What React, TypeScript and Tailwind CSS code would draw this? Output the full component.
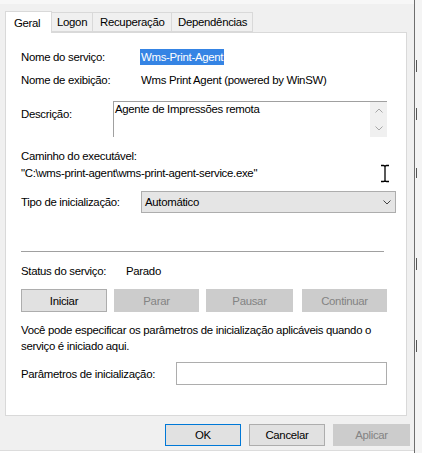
import React from "react";

function Chevron({ up = false, className = "" }: { up?: boolean; className?: string }) {
  return (
    <svg width="8" height="5" viewBox="0 0 8 5" className={className}>
      <path
        d={up ? "M0.5 4.5 L4 1 L7.5 4.5" : "M0.5 0.5 L4 4 L7.5 0.5"}
        fill="none"
        stroke="currentColor"
        strokeWidth="1"
      />
    </svg>
  );
}

function Btn({
  label,
  disabled,
  focused,
  className = "",
}: {
  label: string;
  disabled?: boolean;
  focused?: boolean;
  className?: string;
}) {
  return (
    <div
      className={`flex items-center justify-center border ${
        disabled
          ? "border-[#cccccc] bg-[#cccccc] text-[#838383]"
          : focused
          ? "border-[#0078d7] bg-[#e1e1e1] text-black"
          : "border-[#adadad] bg-[#e1e1e1] text-black"
      } ${className}`}
    >
      {label}
    </div>
  );
}

export default function App() {
  return (
    <div
      className="relative flex h-[453px] w-[422px] bg-white text-[11.4px] leading-[16px] tracking-[-0.3px] text-black"
      style={{ fontFamily: '"Liberation Sans", Arial, sans-serif' }}
    >
      <div className="flex h-[451px] w-[414px] flex-col border-b border-[#dcdcdc] bg-[#f0f0f0]">
        <div className="h-[4px] bg-[#f7f7f7]" />

        {/* tabs */}
        <div className="flex h-[28px] items-end pl-[5px]">
          <div className="relative z-10 -mb-px flex h-[22px] w-[47px] items-start border border-b-0 border-[#d9d9d9] bg-white pl-[8px] pt-[3px]">
            Geral
          </div>
          <div className="flex h-[20px] w-[41px] items-center border border-l-0 border-[#d9d9d9] pl-[5px]">
            Logon
          </div>
          <div className="flex h-[20px] w-[79px] items-center border border-l-0 border-[#d9d9d9] pl-[7px]">
            Recuperação
          </div>
          <div className="flex h-[20px] w-[81px] items-center border border-l-0 border-[#d9d9d9] pl-[6px]">
            Dependências
          </div>
        </div>

        {/* panel */}
        <div className="ml-[5px] flex h-[384px] w-[402px] flex-col border border-[#d9d9d9] bg-white pl-[15px]">
          <div className="mt-[16px] flex h-[16px] items-center">
            <div className="w-[119px]">Nome do serviço:</div>
            <span className="bg-[#3584e4] px-px text-white">Wms-Print-Agent</span>
          </div>

          <div className="mt-[7px] flex h-[16px] items-center">
            <div className="w-[119px]">Nome de exibição:</div>
            <span className="pl-px">Wms Print Agent (powered by WinSW)</span>
          </div>

          <div className="mt-[13px] flex h-[36px]">
            <div className="w-[92px] pt-[5px]">Descrição:</div>
            <div className="flex w-[274px] border-l border-t border-[#a0a0a0]">
              <div className="flex-1 pl-[1px] leading-[14px]">Agente de Impressões remota</div>
              <div className="flex w-[17px] flex-col items-center justify-between bg-[#f0f0f0] py-[6px] text-[#a6a6a6]">
                <Chevron up />
                <Chevron />
              </div>
            </div>
          </div>

          <div className="mt-[11px] flex h-[16px] items-center">Caminho do executável:</div>
          <div className="mt-[1px] flex h-[16px] items-center">
            "C:\wms-print-agent\wms-print-agent-service.exe"
          </div>

          <div className="mt-[10px] flex h-[22px] items-center">
            <div className="w-[120px]">Tipo de inicialização:</div>
            <div className="flex h-[22px] w-[255px] items-center justify-between border border-[#adadad] bg-[#e5e5e5] pl-[3px] pr-[4px]">
              <span>Automático</span>
              <Chevron className="text-[#444]" />
            </div>
          </div>

          <div className="mt-[38px] h-px w-[363px] bg-[#a0a0a0]" />

          <div className="mt-[11px] flex h-[16px] items-center">
            <div className="w-[105px]">Status do serviço:</div>
            <span>Parado</span>
          </div>

          <div className="mt-[10px] flex h-[23px] gap-[7px]">
            <Btn label="Iniciar" className="w-[86px]" />
            <Btn label="Parar" disabled className="w-[85px]" />
            <Btn label="Pausar" disabled className="w-[87px]" />
            <Btn label="Continuar" disabled className="ml-[2px] w-[85px]" />
          </div>

          <div className="mt-[10px] whitespace-nowrap">
            Você pode especificar os parâmetros de inicialização aplicáveis quando o
            <br />
            serviço é iniciado aqui.
          </div>

          <div className="mt-[8px] flex h-[23px] items-center">
            <div className="w-[155px]">Parâmetros de inicialização:</div>
            <div className="h-[23px] w-[211px] border border-[#adadad] bg-white" />
          </div>
        </div>

        {/* dialog buttons */}
        <div className="mt-[8px] flex gap-[8px] pl-[165px]">
          <Btn label="OK" focused className="h-[22px] w-[76px]" />
          <Btn label="Cancelar" className="h-[22px] w-[76px]" />
          <Btn label="Aplicar" disabled className="h-[22px] w-[77px]" />
        </div>
      </div>

      {/* edge of window behind */}
      <div className="h-full w-px bg-[#6e6e6e]" />
      <div className="flex h-full w-[7px] flex-col bg-[#f4f4f4]">
        <div className="ml-[1px] mt-[60px] h-[12px] w-px bg-[#555]" />
        <div className="ml-[1px] mt-[36px] h-[12px] w-px bg-[#555]" />
        <div className="ml-[1px] mt-[48px] h-[10px] w-px bg-[#555]" />
        <div className="ml-[1px] mt-[80px] h-[12px] w-px bg-[#555]" />
        <div className="ml-[1px] mt-[70px] h-[12px] w-px bg-[#555]" />
      </div>

      {/* mouse I-beam cursor */}
      <svg
        className="absolute left-[380px] top-[164px]"
        width="10"
        height="19"
        viewBox="0 0 10 19"
      >
        <path
          d="M1 1.5 H3.5 Q5 1.5 5 3 V16 Q5 17.5 3.5 17.5 H1 M9 1.5 H6.5 Q5 1.5 5 3 M5 16 Q5 17.5 6.5 17.5 H9"
          fill="none"
          stroke="#000"
          strokeWidth="1.3"
        />
      </svg>
    </div>
  );
}
